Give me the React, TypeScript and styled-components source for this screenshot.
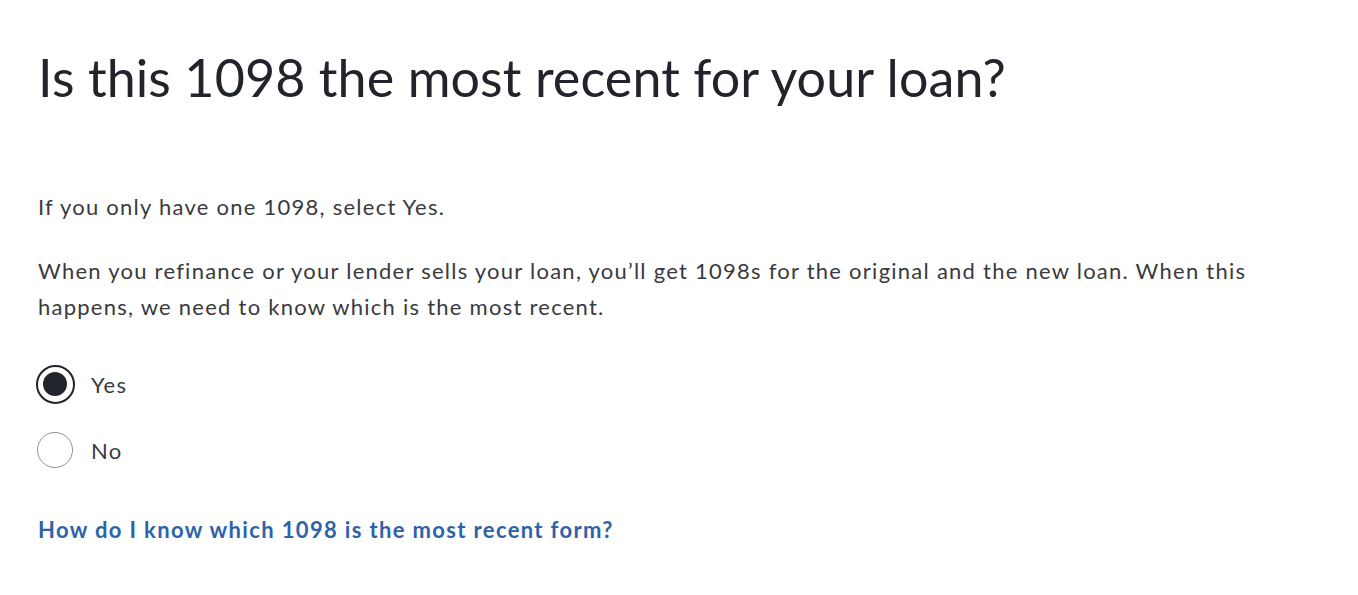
import React, { useState } from 'react';
import styled, { createGlobalStyle } from 'styled-components';

const GlobalStyle = createGlobalStyle`
  html, body {
    margin: 0;
    padding: 0;
    background: #ffffff;
  }
  body {
    font-family: 'Lato', 'Noto Sans', sans-serif;
    color: #393a3d;
  }
`;

const Page = styled.div`
  padding: 45px 38px 0 38px;
`;

const Title = styled.h1`
  margin: 0;
  font-family: 'Lato', sans-serif;
  font-weight: 400;
  font-size: 52px;
  line-height: 64px;
  color: #21242a;
  letter-spacing: 0.1px;
`;

const Body = styled.div`
  margin-top: 80px;
`;

const Paragraph = styled.p`
  margin: 0 0 28px 0;
  font-size: 22px;
  line-height: 36px;
  letter-spacing: 1.25px;
  color: #393a3d;
`;

const RadioList = styled.div`
  display: flex;
  flex-direction: column;
  gap: 26px;
  margin-top: 39px;
`;

const RadioRow = styled.label`
  display: flex;
  align-items: center;
  gap: 16px;
  cursor: pointer;
  font-size: 22px;
  letter-spacing: 1.25px;
  color: #393a3d;
`;

const RadioBox = styled.span`
  width: 40px;
  height: 40px;
  margin-left: -3px;
  display: flex;
  align-items: center;
  justify-content: center;
`;

const RadioCircle = styled.span<{ $checked: boolean }>`
  box-sizing: border-box;
  width: ${p => (p.$checked ? '39px' : '36px')};
  height: ${p => (p.$checked ? '39px' : '36px')};
  border-radius: 50%;
  border: ${p => (p.$checked ? '2px solid #21242a' : '1px solid #8d9096')};
  display: flex;
  align-items: center;
  justify-content: center;
  &::after {
    content: '';
    display: ${p => (p.$checked ? 'block' : 'none')};
    width: 24px;
    height: 24px;
    border-radius: 50%;
    background: #21242a;
  }
`;

const HelpLink = styled.a`
  display: inline-block;
  margin-top: 46px;
  font-size: 22px;
  font-weight: 700;
  letter-spacing: 1.35px;
  color: #2e63aa;
  text-decoration: none;
  cursor: pointer;
`;

export default () => {
  const [answer, setAnswer] = useState<'yes' | 'no'>('yes');
  return (
    <>
      <GlobalStyle />
      <Page>
        <Title>Is this 1098 the most recent for your loan?</Title>
        <Body>
          <Paragraph>If you only have one 1098, select Yes.</Paragraph>
          <Paragraph>
            When you refinance or your lender sells your loan, you’ll get 1098s for the original and the new loan. When this
            <br />
            happens, we need to know which is the most recent.
          </Paragraph>
          <RadioList>
            <RadioRow onClick={() => setAnswer('yes')}>
              <RadioBox>
                <RadioCircle $checked={answer === 'yes'} />
              </RadioBox>
              Yes
            </RadioRow>
            <RadioRow onClick={() => setAnswer('no')}>
              <RadioBox>
                <RadioCircle $checked={answer === 'no'} />
              </RadioBox>
              No
            </RadioRow>
          </RadioList>
          <HelpLink>How do I know which 1098 is the most recent form?</HelpLink>
        </Body>
      </Page>
    </>
  );
};
